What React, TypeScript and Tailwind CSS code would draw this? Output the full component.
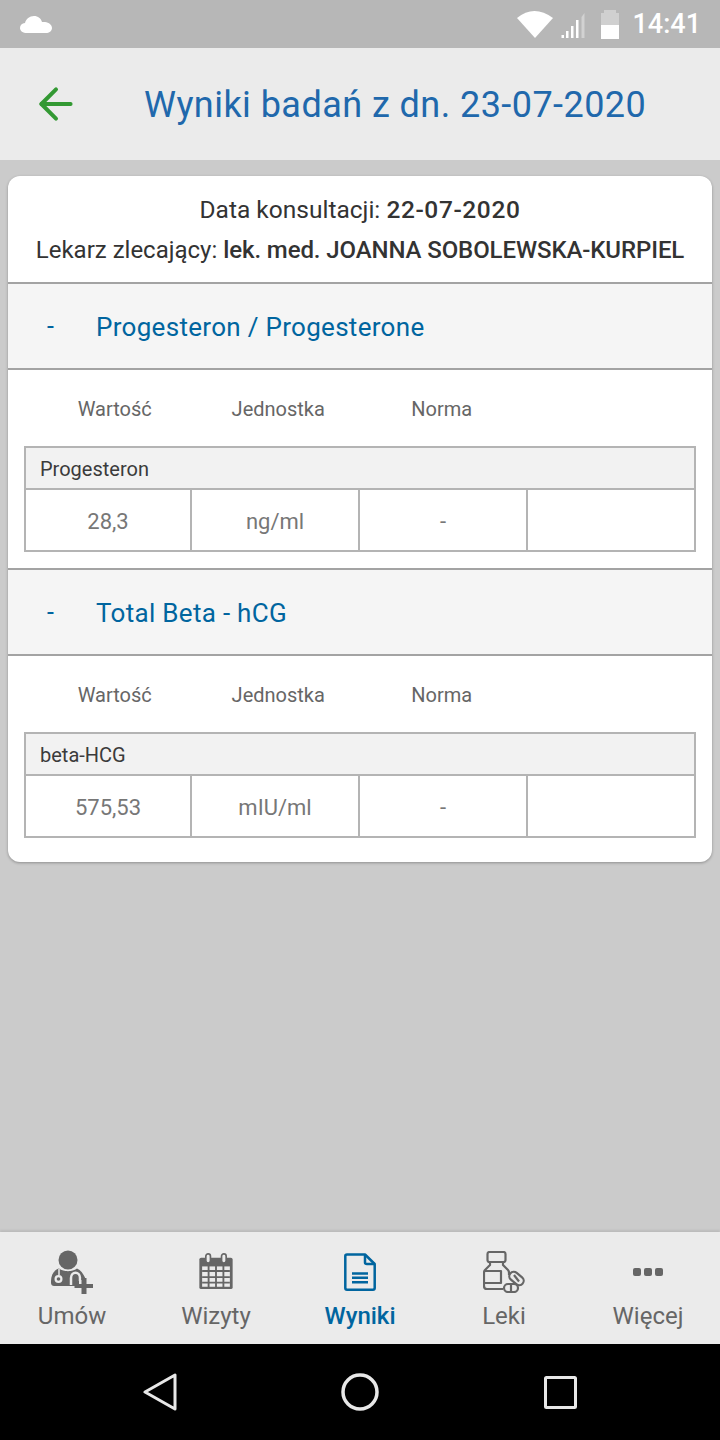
import { ArrowLeft } from 'lucide-react';

function StatusBar() {
  return (
    <div className="h-12 bg-[#b7b7b7] flex items-center justify-between pl-[20px] pr-[19px]">
      <svg width="32" height="20" viewBox="0 0 32 20" fill="#fff">
        <path d="M7 19 C3 19 0 17 0 14 C0 11 2 9.500 5 9 C6 5 9.500 2 14 2 C18 2 21 4.500 22 8 C23 8 24 8 25 8 C29 8.500 32 11 32 14 C32 17 29 19 26 19 Z" />
      </svg>
      <div className="flex items-center">
        <svg width="36" height="28" viewBox="0 0 36 28" className="mr-[8px] mt-[-1px]">
          <path d="M0 8 Q17 -6 36 8 L18 28 Z" fill="#fff" />
        </svg>
        <svg width="24" height="26" viewBox="0 0 24 26" className="mr-[16px] mt-[3px]">
          <path d="M0.500 25 h2.500 v-3 h-2.500 Z M5 25 h2.500 v-7 h-2.500 Z M10 25 h2.500 v-12 h-2.500 Z M15 25 h2.500 v-18 h-2.500 Z" fill="#fff" />
          <path d="M20.500 25 h3 v-25 L20.500 4 Z" fill="#d2d2d2" />
        </svg>
        <div className="w-[18px] h-[29px] mr-[13px] flex flex-col items-center">
          <div className="w-[12px] h-[3px] bg-[#d0d0d0]" />
          <div className="w-[18px] h-[12px] bg-[#d0d0d0]" />
          <div className="w-[18px] h-[14px] bg-white" />
        </div>
        <span className="text-white text-[27px] font-medium leading-none">14:41</span>
      </div>
    </div>
  );
}

function Header() {
  return (
    <div className="h-[112px] bg-[#ebebeb] flex items-center">
      <ArrowLeft className="ml-[31px] text-[#339933]" size={50} strokeWidth={4} absoluteStrokeWidth />
      <h1 className="ml-[63px] mt-[2px] text-[#2068ac] text-[36px] leading-none tracking-[0.45px]">Wyniki badań z dn. 23-07-2020</h1>
    </div>
  );
}

function Section({ title, name, value, unit }: { title: string; name: string; value: string; unit: string }) {
  return (
    <div>
      <div className="h-[88px] bg-[#f5f5f5] border-y-2 border-[#a3a3a3] flex items-center pl-[39px] pt-[2px]">
        <span className="w-[49px] text-[#00659f] text-[25px]">-</span>
        <span className="text-[#00659f] text-[26px] tracking-[0.3px]">{title}</span>
      </div>
      <div className="h-[76px] px-[25px] pt-[2px] grid grid-cols-4 items-center text-[20px] text-[#666666] text-center">
        <span>Wartość</span>
        <span>Jednostka</span>
        <span>Norma</span>
        <span />
      </div>
      <div className="mx-[16px] border-2 border-[#b4b4b4]">
        <div className="h-[42px] bg-[#f2f2f2] border-b-2 border-[#b4b4b4] flex items-center pl-[14px] pt-[2px] text-[20px] text-[#3b3b3b]">
          {name}
        </div>
        <div className="h-[60px] grid grid-cols-[166px_168px_168px_1fr] text-[22px] text-[#777777] text-center">
          <div className="flex items-center justify-center pt-[2px] border-r-2 border-[#b4b4b4]">{value}</div>
          <div className="flex items-center justify-center pt-[2px] border-r-2 border-[#b4b4b4]">{unit}</div>
          <div className="flex items-center justify-center pt-[2px] border-r-2 border-[#b4b4b4]">-</div>
          <div />
        </div>
      </div>
    </div>
  );
}

function DoctorIcon() {
  return (
    <svg width="42" height="44" viewBox="0 0 42 44" fill="#666">
      <circle cx="17" cy="10" r="9.500" />
      <path d="M8 18.500 C3 20 0 25 0 31 V33 C0 35 1.500 36 3 36 H28 V30 H35 C33 25 31 21 26 18.500 C21 22 13 22 8 18.500 Z" />
      <circle cx="7.500" cy="29" r="4" fill="#ebebeb" />
      <circle cx="7.500" cy="29" r="1.800" fill="#666" />
      <path d="M8 19 V25" stroke="#ebebeb" strokeWidth="1.500" />
      <path d="M20 35 V28 C20 21 29 21 29 28 V31" fill="none" stroke="#ebebeb" strokeWidth="2.500" />
      <path d="M30.500 28 h5 v6 h6.500 v4 h-6.500 v6 h-5 v-6 h-7 v-4 h7 Z" />
    </svg>
  );
}

function CalendarIcon() {
  return (
    <svg width="34" height="37" viewBox="0 0 36 40">
      <path d="M2 5 H34 Q36 5 36 7 V37 Q36 39 34 39 H2 Q0 39 0 37 V7 Q0 5 2 5 Z" fill="#666" />
      <path d="M3 14.500 h30 v22 h-30 Z" fill="#ebebeb" />
      <path d="M3 19.500 H33 M3 26 H33 M3 32 H33 M10 14 V37 M18 14 V37 M26 14 V37" stroke="#666" strokeWidth="2" />
      <rect x="7" y="1" width="5" height="10" rx="2.500" fill="#ebebeb" stroke="#666" strokeWidth="1.800" />
      <rect x="24" y="1" width="5" height="10" rx="2.500" fill="#ebebeb" stroke="#666" strokeWidth="1.800" />
    </svg>
  );
}

function DocumentIcon() {
  return (
    <svg width="32" height="38" viewBox="0 0 32 38" fill="none" stroke="#00659f" strokeWidth="2.500" strokeLinejoin="round">
      <path d="M3 1.500 H21 L30.700 11 V35 Q30.700 36.700 29 36.700 H3 Q1.300 36.700 1.300 35 V3 Q1.300 1.500 3 1.500 Z" />
      <path d="M21 1.500 V9.500 Q21 11 23 11 H30.700" />
      <path d="M8 20.500 H24 M8 24.800 H24 M8 29.200 H24" strokeWidth="2.400" />
    </svg>
  );
}

function PillsIcon() {
  return (
    <svg width="42" height="42" viewBox="0 0 42 42" fill="none" stroke="#666" strokeWidth="2.200" strokeLinejoin="round">
      <rect x="4.500" y="1" width="18" height="10" rx="2" />
      <path d="M7 11 V14 L2 19 Q1 20 1 22 V35 Q1 38 4 38 H20" />
      <path d="M20 11 V14 L25 19 Q26 20 26 22 V24" />
      <path d="M1 20 H18 V32 H1" />
      <rect x="25.500" y="23" width="16" height="9" rx="4.500" transform="rotate(40 33.500 27.500)" />
      <path d="M31 24 L36 30.500" />
      <rect x="21" y="33" width="14" height="8" rx="4" />
      <path d="M28 33 V41" />
    </svg>
  );
}

function DotsIcon() {
  return (
    <svg width="30" height="10" viewBox="0 0 30 10" fill="#666">
      <rect x="0" y="1" width="8" height="8" rx="2" />
      <rect x="11" y="1" width="8" height="8" rx="2" />
      <rect x="22" y="1" width="8" height="8" rx="2" />
    </svg>
  );
}

function NavItem({ label, active, children }: { label: string; active?: boolean; children: React.ReactNode }) {
  return (
    <div className="flex-1 flex flex-col items-center">
      <div className="h-[49px] mb-[5px] flex items-center justify-center">{children}</div>
      <span className={active ? 'text-[24px] leading-[30px] text-[#00659f] font-medium' : 'text-[24px] leading-[30px] text-[#666666]'}>{label}</span>
    </div>
  );
}

export default function App() {
  return (
    <div className="w-[720px] h-[1440px] bg-[#cbcbcb] flex flex-col font-['Roboto',sans-serif] overflow-hidden">
      <StatusBar />
      <Header />

      <main className="flex-1 px-[8px] pt-[16px]">
        <div className="bg-white rounded-[12px] shadow-[0_1px_3px_rgba(0,0,0,0.3)] overflow-hidden pb-[24px]">
          <div className="h-[106px] flex flex-col items-center pt-[14px] text-[#333333]">
            <p className="text-[24.500px] leading-[40px]">Data konsultacji: <b className="font-medium tracking-[0.6px]">22-07-2020</b></p>
            <p className="text-[24px] leading-[41px]">Lekarz zlecający: <b className="font-medium tracking-[-0.1px]">lek. med. JOANNA SOBOLEWSKA-KURPIEL</b></p>
          </div>
          <Section title="Progesteron / Progesterone" name="Progesteron" value="28,3" unit="ng/ml" />
          <div className="h-[16px]" />
          <Section title="Total Beta - hCG" name="beta-HCG" value="575,53" unit="mIU/ml" />
        </div>
      </main>

      {/* dolna nawigacja */}
      <nav className="h-[112px] bg-[#ebebeb] shadow-[0_-2px_2px_rgba(0,0,0,0.08)] flex pt-[15px]">
        <NavItem label="Umów"><DoctorIcon /></NavItem>
        <NavItem label="Wizyty"><CalendarIcon /></NavItem>
        <NavItem label="Wyniki" active><DocumentIcon /></NavItem>
        <NavItem label="Leki"><PillsIcon /></NavItem>
        <NavItem label="Więcej"><DotsIcon /></NavItem>
      </nav>

      <div className="h-[96px] bg-black px-[60px] grid grid-cols-3 items-center justify-items-center">
        <svg width="34" height="38" viewBox="0 0 34 38" fill="none" stroke="#e8e8e8" strokeWidth="3" strokeLinejoin="round">
          <path d="M2 19 L32 2 V36 Z" />
        </svg>
        <svg width="38" height="38" viewBox="0 0 38 38" fill="none" stroke="#e8e8e8" strokeWidth="3.500">
          <circle cx="19" cy="19" r="17" />
        </svg>
        <svg width="33" height="33" viewBox="0 0 33 33" fill="none" stroke="#e8e8e8" strokeWidth="3" strokeLinejoin="round">
          <rect x="1.500" y="1.500" width="30" height="30" rx="1" />
        </svg>
      </div>
    </div>
  );
}
